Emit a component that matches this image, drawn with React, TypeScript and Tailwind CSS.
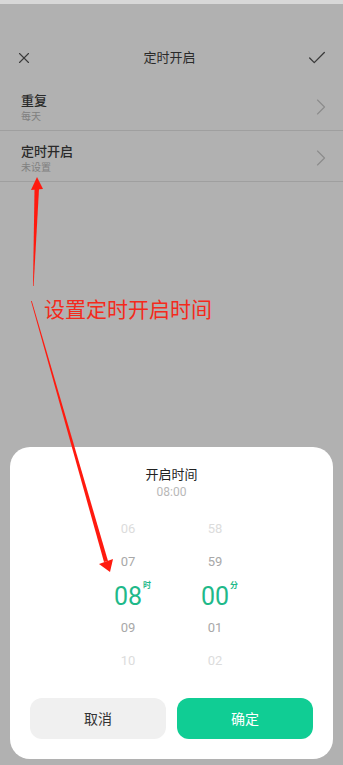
import { X, Check, ChevronRight } from "lucide-react";

const FONT = { fontFamily: '"Noto Sans", "Noto Sans CJK SC", sans-serif' };

const HOURS = ["06", "07", "08", "09", "10"];
const MINUTES = ["58", "59", "00", "01", "02"];
const ROW_TONE = ["text-[#dcdcdc]", "text-[#a8a8a8]", "", "text-[#a8a8a8]", "text-[#dcdcdc]"];

function Row({ title, sub }: { title: string; sub: string }) {
  return (
    <div className="flex items-center justify-between border-b border-[#9f9f9f] pb-[7px] pl-[21px] pr-[8px] pt-[11px]">
      <div className="flex flex-col">
        <span className="text-[13px] font-medium leading-[18px] text-[#2a2a2a]">{title}</span>
        <span className="text-[10px] leading-[14px] text-[#808080]">{sub}</span>
      </div>
      <ChevronRight className="h-7 w-7 text-[#8c8c8c]" strokeWidth={1} />
    </div>
  );
}

function Column({ items, unit }: { items: string[]; unit: string }) {
  return (
    <div className="flex w-[87px] flex-col items-center" style={{ fontFamily: 'Roboto, "Noto Sans CJK SC", sans-serif' }}>
      {items.map((v, i) =>
        i === 2 ? (
          <div key={v} className="relative flex h-[33px] items-center">
            <span className="translate-y-[2px] text-[25px] leading-none text-[#1fb98a]">{v}</span>
            <span className="absolute -right-[9px] top-[2px] text-[8px] font-bold text-[#1fb98a]">{unit}</span>
          </div>
        ) : (
          <div key={v} className={`flex h-[33px] items-center text-[13px] ${ROW_TONE[i]}`}>
            {v}
          </div>
        )
      )}
    </div>
  );
}

export default function App() {
  return (
    <div className="relative flex min-h-[765px] w-[343px] flex-col overflow-hidden bg-[#b1b1b1]" style={FONT}>
      <div className="h-[4px] bg-[#d8d8d8]" />

      <div className="mt-[32px] flex h-[44px] items-center justify-between px-[15px]">
        <X className="h-[18px] w-[18px] text-[#3a3a3a]" strokeWidth={1.5} />
        <span className="text-[13px] text-[#2a2a2a]">定时开启</span>
        <Check className="h-[22px] w-[22px] text-[#3a3a3a]" strokeWidth={1.4} />
      </div>

      <div>
        <Row title="重复" sub="每天" />
        <Row title="定时开启" sub="未设置" />
      </div>

      <div className="mt-[113px] pl-[44px] text-[21px] leading-[28px] text-[#f42a1c]">设置定时开启时间</div>

      <div className="mx-[10px] mb-[6px] mt-auto flex flex-col items-center rounded-[20px] bg-white px-[20px] pb-[20px] pt-[17px]">
        <span className="text-[13px] leading-[20px] text-[#222]">开启时间</span>
        <span className="text-[12px] leading-[16px] text-[#b8b8b8]" style={{ fontFamily: "Roboto, sans-serif" }}>
          08:00
        </span>
        <div className="mt-[12px] flex">
          <Column items={HOURS} unit="时" />
          <Column items={MINUTES} unit="分" />
        </div>
        <div className="mt-[21px] grid w-full grid-cols-2 gap-[11px]">
          <button className="h-[41px] rounded-[12px] bg-[#f0f0f0] text-[14px] text-[#333]">取消</button>
          <button className="h-[41px] rounded-[12px] bg-[#10cd94] text-[14px] text-white">确定</button>
        </div>
      </div>

      <svg className="pointer-events-none absolute left-0 top-0" width="343" height="765" viewBox="0 0 343 765">
        <polygon points="37,177 31,190 43,189" fill="#ff1a0f" />
        <polygon points="34.5,189 39,189 33.6,286 33,286" fill="#ff1a0f" />
        <polygon points="31,301 31.8,301 108,561 104,562" fill="#ff1a0f" />
        <polygon points="110,572 99,564 113,559" fill="#ff1a0f" />
      </svg>
    </div>
  );
}
